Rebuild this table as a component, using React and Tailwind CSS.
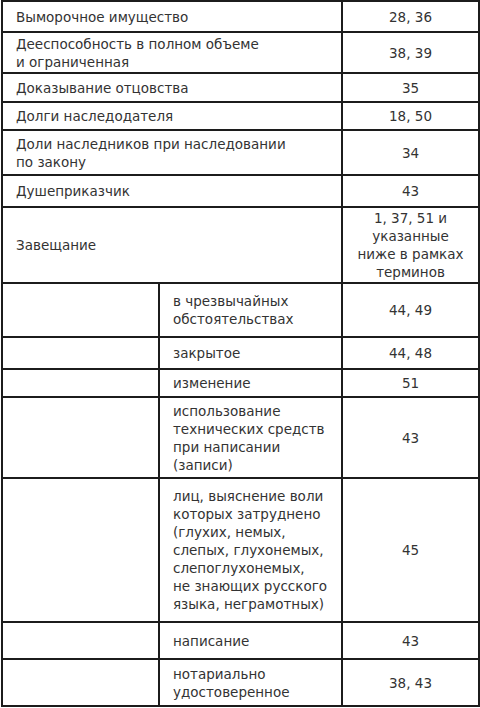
import React from "react";

const rows = [
  { h: "h-[31px]", term: ["Выморочное имущество"], num: ["28, 36"] },
  { h: "h-[41px]", term: ["Дееспособность в полном объеме", "и ограниченная"], num: ["38, 39"] },
  { h: "h-[29px]", term: ["Доказывание отцовства"], num: ["35"] },
  { h: "h-[28px]", term: ["Долги наследодателя"], num: ["18, 50"] },
  { h: "h-[45px]", term: ["Доли наследников при наследовании", "по закону"], num: ["34"] },
  { h: "h-[32px]", term: ["Душеприказчик"], num: ["43"] },
  { h: "h-[76px]", term: ["Завещание"], num: ["1, 37, 51 и", "указанные", "ниже в рамках", "терминов"] },
];

const subRows = [
  { h: "h-[54px]", term: ["в чрезвычайных", "обстоятельствах"], num: ["44, 49"] },
  { h: "h-[32px]", term: ["закрытое"], num: ["44, 48"] },
  { h: "h-[28px]", term: ["изменение"], num: ["51"] },
  { h: "h-[81px]", term: ["использование", "технических средств", "при написании", "(записи)"], num: ["43"] },
  {
    h: "h-[144px]",
    term: [
      "лиц, выяснение воли",
      "которых затруднено",
      "(глухих, немых,",
      "слепых, глухонемых,",
      "слепоглухонемых,",
      "не знающих русского",
      "языка, неграмотных)",
    ],
    num: ["45"],
  },
  { h: "h-[37px]", term: ["написание"], num: ["43"] },
  { h: "h-[47px]", term: ["нотариально", "удостоверенное"], num: ["38, 43"] },
];

const Lines = ({ lines }) =>
  lines.map((l, i) => (
    <React.Fragment key={i}>
      {i > 0 && <br />}
      {l}
    </React.Fragment>
  ));

export default function App() {
  const cell = "border-2 border-[#1c1c1c] align-middle p-0";
  return (
    <div className="w-[480px] h-[708px] bg-white overflow-hidden pl-[1px]">
      <table className="w-[477px] table-fixed border-collapse text-[#333] text-[13.5px] leading-[18px] font-['DejaVu_Sans',Verdana,sans-serif]">
        <colgroup>
          <col className="w-[157px]" />
          <col className="w-[183px]" />
          <col className="w-[137px]" />
        </colgroup>
        <tbody>
          {rows.map((r, i) => (
            <tr key={i} className={r.h}>
              <td colSpan={2} className={`${cell} pl-[13px]`}>
                <Lines lines={r.term} />
              </td>
              <td className={`${cell} text-center`}>
                <Lines lines={r.num} />
              </td>
            </tr>
          ))}
          {subRows.map((r, i) => (
            <tr key={"s" + i} className={r.h}>
              <td className={cell}></td>
              <td className={`${cell} pl-[13px]`}>
                <Lines lines={r.term} />
              </td>
              <td className={`${cell} text-center`}>
                <Lines lines={r.num} />
              </td>
            </tr>
          ))}
        </tbody>
      </table>
    </div>
  );
}
